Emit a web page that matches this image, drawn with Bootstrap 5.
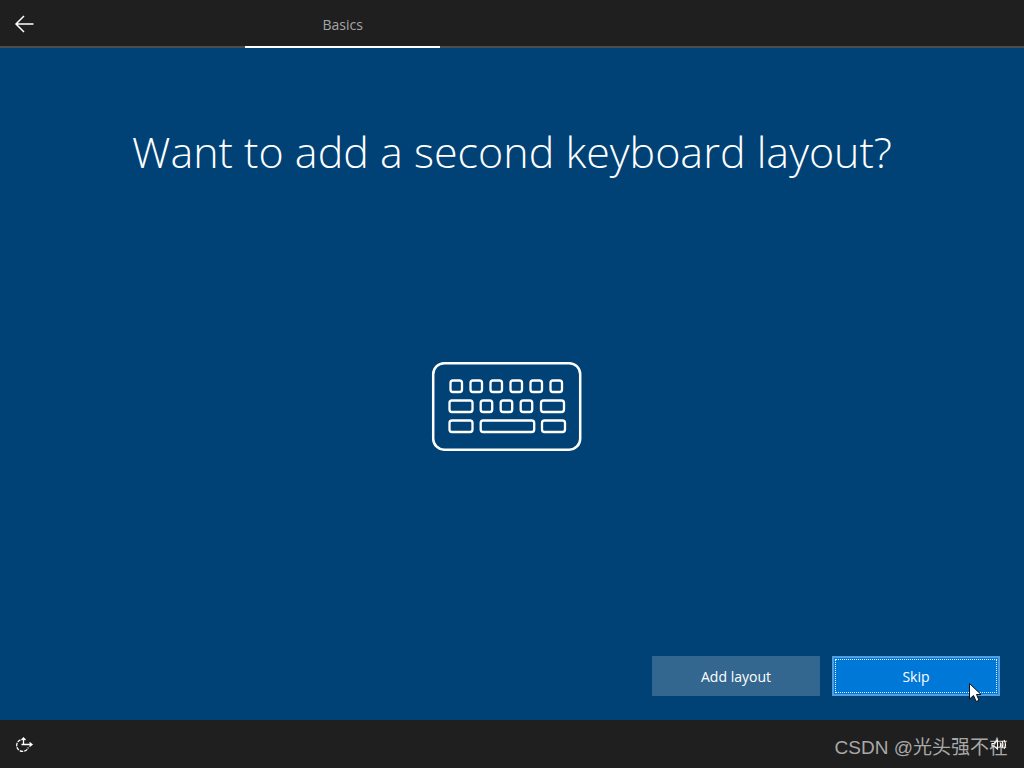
<!DOCTYPE html>
<html lang="en">
<head>
<meta charset="utf-8">
<meta name="viewport" content="width=device-width, initial-scale=1">
<title>Keyboard layout setup</title>
<link href="https://cdn.jsdelivr.net/npm/bootstrap@5.3.0/dist/css/bootstrap.min.css" rel="stylesheet">
<style>
body { background: #004275; color: #fff; font-family: "Open Sans", "Noto Sans", sans-serif; font-size: 14px; }
.topbar { background: #1f1f1f; height: 48px; box-shadow: inset 0 -2px #4c4c4c; }
.back { width: 48px; height: 48px; }
.step { width: 20%; height: 48px; margin-left: 20.2%; padding-top: 3px; border-bottom: 2px solid #fff; color: #a6a6a6; line-height: 20px; }
.question { font-size: 43px; font-weight: 300; line-height: 60px; margin-top: 74px; }
.actions { gap: 12px; padding: 24px; }
.choice { width: 168px; height: 40px; border: 0; border-radius: 0; color: #fff; font-size: 14px; background: #33678f; }
.choice:hover { background: #4c7a9d; color: #fff; }
.choice-main, .choice-main:hover { background: #0078d7; border: 2px solid #4ca0e3; outline: 1px dotted #fff; outline-offset: -4px; }
.pointer { left: 137px; top: 27px; }
.bottombar { background: #1f1f1f; height: 48px; }
.credit { color: #a9a9a9; font: 19px/24px "Liberation Sans", "Noto Sans CJK SC", sans-serif; margin-right: 16px; padding-top: 16px; }
.sound { right: 0; top: 10px; }
</style>
</head>
<body class="d-flex flex-column min-vh-100">
<header class="topbar d-flex">
  <button type="button" class="back btn border-0 rounded-0 p-0 d-flex align-items-center justify-content-center" aria-label="Back">
    <svg width="48" height="48" fill="none" stroke="#fff" stroke-width="1.5"><path d="M16 24H33.500M24 16L16 24L24 32"/></svg>
  </button>
  <nav class="d-flex flex-grow-1" aria-label="Setup steps"><span class="step d-flex align-items-center justify-content-center" aria-current="step">Basics</span></nav>
</header>
<main class="flex-grow-1 d-flex flex-column">
  <h1 class="question text-center mb-0">Want to add a second keyboard layout?</h1>
  <div class="flex-grow-1 d-flex align-items-center justify-content-center">
    <svg class="keyboard" width="162" height="92" viewBox="0 0 162 92" fill="none" stroke="#fff" stroke-width="2.5" aria-hidden="true">
      <rect x="2.200" y="2.200" width="147" height="86.500" rx="11"/>
      <g stroke-width="2.300">
        <rect x="19.500" y="19.500" width="11.500" height="11.500" rx="2.500"/>
        <rect x="39.500" y="19.500" width="11.500" height="11.500" rx="2.500"/>
        <rect x="59.500" y="19.500" width="11.500" height="11.500" rx="2.500"/>
        <rect x="79.500" y="19.500" width="11.500" height="11.500" rx="2.500"/>
        <rect x="99.500" y="19.500" width="11.500" height="11.500" rx="2.500"/>
        <rect x="119.500" y="19.500" width="11.500" height="11.500" rx="2.500"/>
        <rect x="18.500" y="39.500" width="23" height="11.500" rx="2.500"/>
        <rect x="49.700" y="39.500" width="11.500" height="11.500" rx="2.500"/>
        <rect x="69.700" y="39.500" width="11.500" height="11.500" rx="2.500"/>
        <rect x="89.700" y="39.500" width="11.500" height="11.500" rx="2.500"/>
        <rect x="110" y="39.500" width="23" height="11.500" rx="2.500"/>
        <rect x="18.500" y="59.500" width="23" height="11.500" rx="2.500"/>
        <rect x="49.700" y="59.500" width="53.500" height="11.500" rx="2.500"/>
        <rect x="111" y="59.500" width="23" height="11.500" rx="2.500"/>
      </g>
    </svg>
  </div>
  <div class="actions d-flex justify-content-end">
    <button type="button" class="choice btn p-0">Add layout</button>
    <div class="position-relative">
      <button type="button" class="choice choice-main btn p-0">Skip</button>
      <svg class="pointer position-absolute pe-none" width="16" height="24" aria-hidden="true"><path d="M.5 .5V16L4.500 12.500L7.200 18.500L10 17.200L7.500 11.500H12Z" fill="#fff" stroke="#111"/></svg>
    </div>
  </div>
</main>
<footer class="bottombar d-flex justify-content-between position-relative">
  <button type="button" class="back btn border-0 rounded-0 p-0" aria-label="Ease of Access">
    <svg class="d-block" width="48" height="48" fill="none" stroke="#fff" stroke-width="1.300"><path d="M20.500 19.800A6 6 0 1 0 28.300 27.500" stroke-dasharray="3.500 1"/><path d="M23.500 18V25M21.500 20L23.500 18L25.500 20M21.500 24.500H32M29.500 22.500L32 24.500L29.500 26.500"/></svg>
  </button>
  <span class="credit">CSDN @光头强不在</span>
  <button type="button" class="sound btn border-0 p-0 position-absolute" aria-label="Volume">
    <svg class="d-block" width="36" height="28" fill="none" stroke="#fff" stroke-width="1.100"><path d="M4 13.500H6L9.500 10V19L6 16H4ZM12 12.500Q13.500 14.500 12 17M14 11Q16 14.500 14 18M16 10Q19 14.500 16 19"/></svg>
  </button>
</footer>
<script src="https://cdn.jsdelivr.net/npm/bootstrap@5.3.0/dist/js/bootstrap.bundle.min.js"></script>
</body>
</html>
